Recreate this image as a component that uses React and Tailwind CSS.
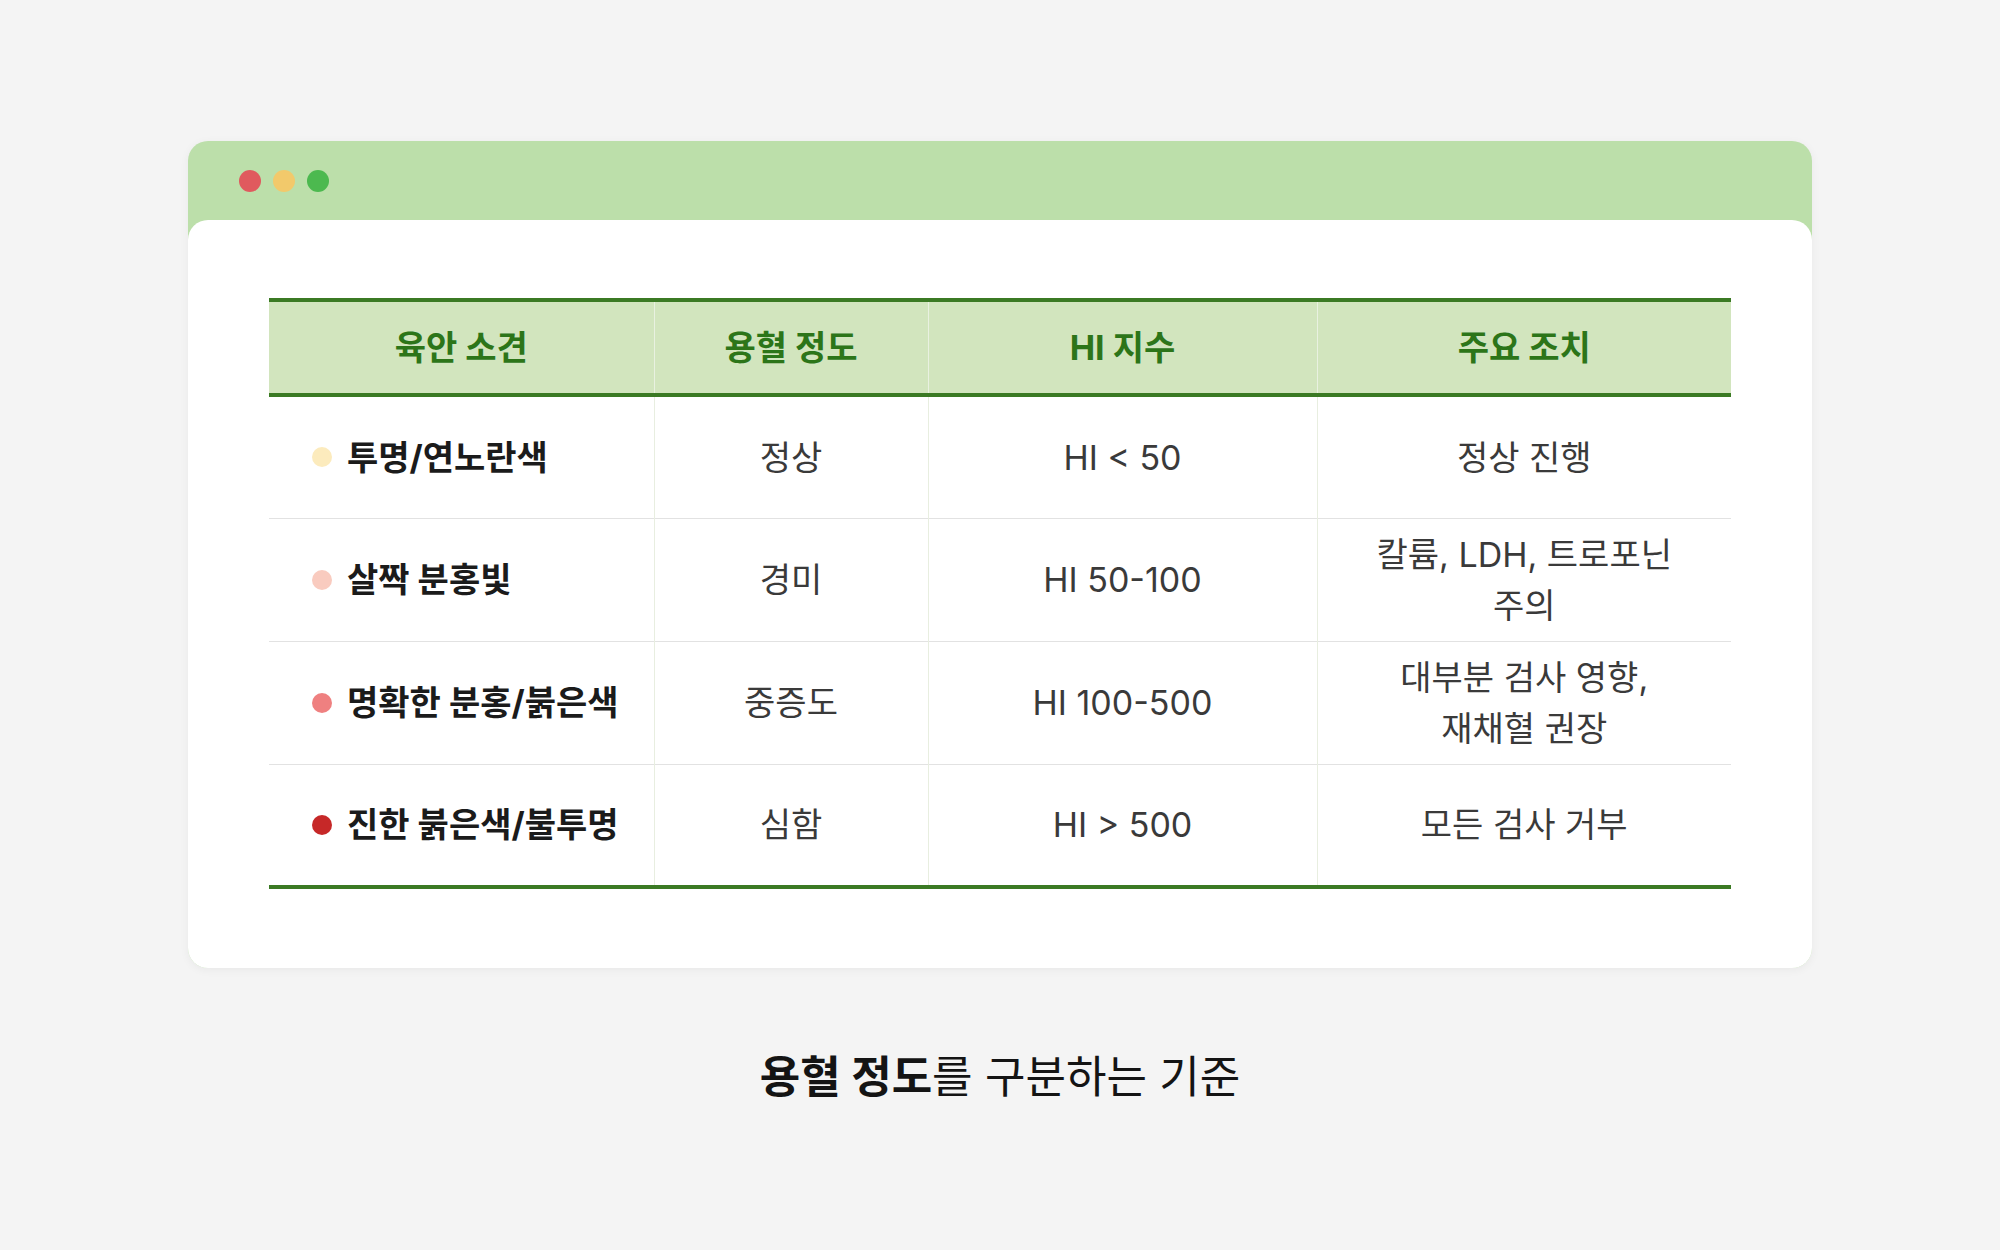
const rows = [
  { dot: 'bg-[#fcebbd]', name: '투명/연노란색', degree: '정상', hi: 'HI < 50', action: '정상 진행' },
  { dot: 'bg-[#f9cbbf]', name: '살짝 분홍빛', degree: '경미', hi: 'HI 50-100', action: '칼륨, LDH, 트로포닌 주의' },
  { dot: 'bg-[#ef8080]', name: '명확한 분홍/붉은색', degree: '중증도', hi: 'HI 100-500', action: '대부분 검사 영향, 재채혈 권장' },
  { dot: 'bg-[#c62828]', name: '진한 붉은색/불투명', degree: '심함', hi: 'HI > 500', action: '모든 검사 거부' },
]

const headers = ['육안 소견', '용혈 정도', 'HI 지수', '주요 조치']

const App = () => {
  return (
    <div
      className="min-h-[1250px] bg-[#f4f4f4] flex flex-col items-center pt-[141px]"
      style={{ fontFamily: 'Inter, "Noto Sans CJK KR", sans-serif' }}
    >
      <div className="w-[1624px] rounded-[20px] bg-[#bcdfaa] overflow-hidden shadow-[0_2px_10px_rgba(0,0,0,0.05)]">
        <div className="h-[79px] flex items-center gap-[12px] pl-[51px]">
          <span className="w-[22px] h-[22px] rounded-full bg-[#e05a5e]" />
          <span className="w-[22px] h-[22px] rounded-full bg-[#f2c96b]" />
          <span className="w-[22px] h-[22px] rounded-full bg-[#4cb94f]" />
        </div>
        <div className="bg-white rounded-t-[20px] px-[81px] pt-[78px] pb-[79px]">
          <table className="w-full table-fixed border-collapse">
            <colgroup>
              <col className="w-[385px]" />
              <col className="w-[274px]" />
              <col className="w-[389px]" />
              <col />
            </colgroup>
            <thead>
              <tr className="bg-[#d2e5be] border-t-4 border-b-4 border-[#3b7a24]">
                {headers.map((h, i) => (
                  <th
                    key={h}
                    className={`h-[95px] p-0 text-[34px] font-bold text-[#2c7519] text-center ${i > 0 ? 'border-l border-l-[#e9f1e1]' : ''}`}
                  >
                    {h}
                  </th>
                ))}
              </tr>
            </thead>
            <tbody>
              {rows.map((r, idx) => (
                <tr
                  key={r.name}
                  className={idx === rows.length - 1 ? 'border-b-4 border-[#3b7a24]' : 'border-b border-[#e2e2e2]'}
                >
                  <td className="h-[123px] pl-[43px] pr-2">
                    <div className="flex items-center gap-[15px]">
                      <span className={`w-[20px] h-[20px] rounded-full shrink-0 ${r.dot}`} />
                      <span className="text-[34px] font-bold text-[#1b1b1b] whitespace-nowrap">{r.name}</span>
                    </div>
                  </td>
                  <td className="border-l border-l-[#e8eee0] text-center text-[34px] text-[#3a3a3a]">{r.degree}</td>
                  <td className="border-l border-l-[#e8eee0] text-center text-[34px] text-[#3a3a3a]">{r.hi}</td>
                  <td className="border-l border-l-[#e8eee0] text-center text-[34px] leading-[1.5] text-[#3a3a3a] px-[36px] break-keep">
                    {r.action}
                  </td>
                </tr>
              ))}
            </tbody>
          </table>
        </div>
      </div>
      <p className="mt-[76px] text-[44px] text-[#141414]">
        <span className="font-bold">용혈 정도</span>를 구분하는 기준
      </p>
    </div>
  )
}

export default App
